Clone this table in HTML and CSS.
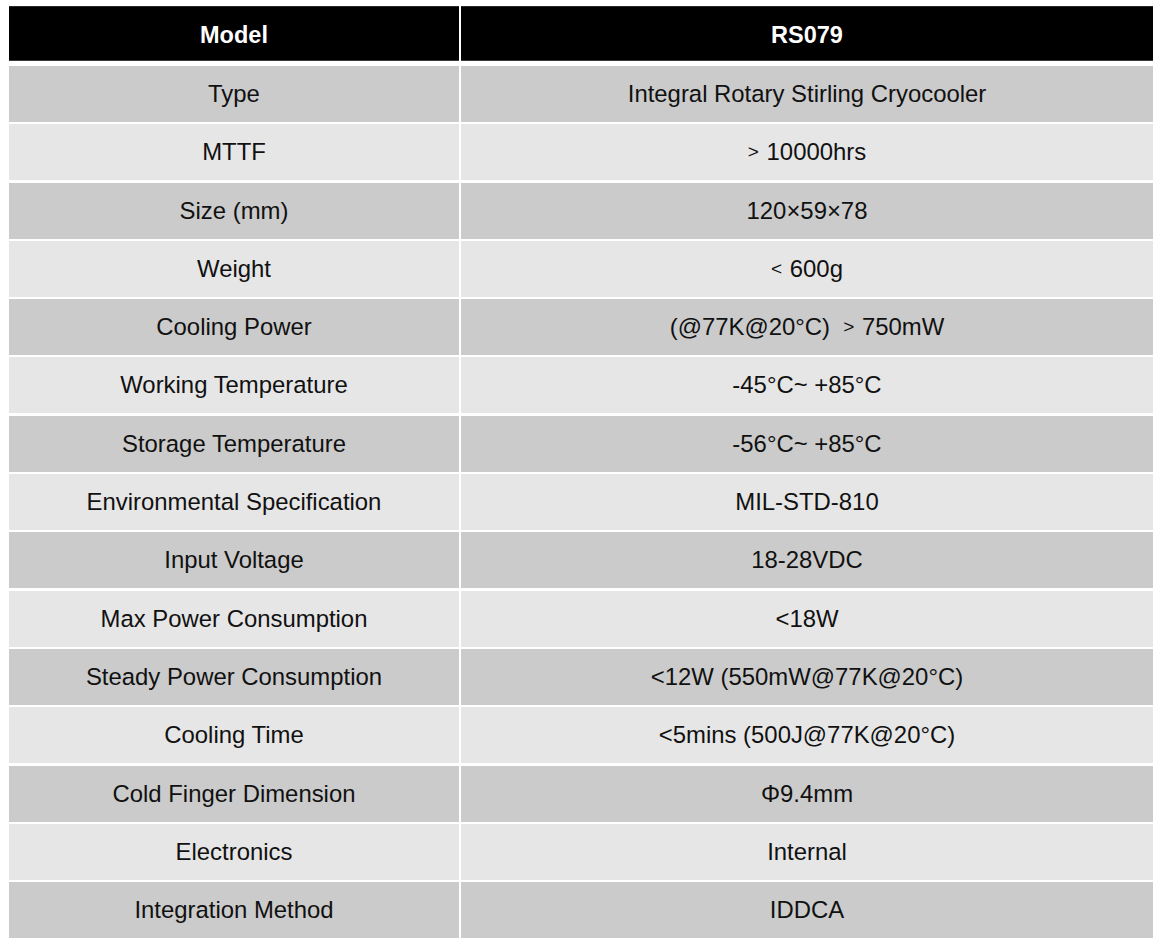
FILE: index.html
```html
<!DOCTYPE html>
<html>
<head>
<meta charset="utf-8">
<link rel="stylesheet" href="styles.css">
</head>
<body>
<div class="sheet">
  <div class="head">
    <div class="hcell">Model</div>
    <div class="hcell">RS079</div>
  </div>
  <div class="rows">
    <div class="cell dark">Type</div><div class="cell dark">Integral Rotary Stirling Cryocooler</div>
    <div class="cell light">MTTF</div><div class="cell light"><span class="sym">&gt;</span> 10000hrs</div>
    <div class="cell dark">Size (mm)</div><div class="cell dark">120×59×78</div>
    <div class="cell light">Weight</div><div class="cell light"><span class="sym">&lt;</span> 600g</div>
    <div class="cell dark">Cooling Power</div><div class="cell dark">(@77K@20°C)&nbsp;&nbsp;<span class="sym">&gt;</span> 750mW</div>
    <div class="cell light">Working Temperature</div><div class="cell light">-45°C~ +85°C</div>
    <div class="cell dark">Storage Temperature</div><div class="cell dark">-56°C~ +85°C</div>
    <div class="cell light">Environmental Specification</div><div class="cell light">MIL-STD-810</div>
    <div class="cell dark">Input Voltage</div><div class="cell dark">18-28VDC</div>
    <div class="cell light">Max Power Consumption</div><div class="cell light">&lt;18W</div>
    <div class="cell dark">Steady Power Consumption</div><div class="cell dark">&lt;12W (550mW@77K@20°C)</div>
    <div class="cell light">Cooling Time</div><div class="cell light">&lt;5mins (500J@77K@20°C)</div>
    <div class="cell dark">Cold Finger Dimension</div><div class="cell dark">Φ9.4mm</div>
    <div class="cell light">Electronics</div><div class="cell light">Internal</div>
    <div class="cell dark">Integration Method</div><div class="cell dark">IDDCA</div>
  </div>
</div>
</body>
</html>
```

FILE: styles.css
```css
html, body {
  margin: 0;
  padding: 0;
  background: #ffffff;
}
.sheet {
  padding: 6px 0 0 9px;
  width: 1144px;
  font-family: "Liberation Sans", Arial, sans-serif;
}
.head {
  display: grid;
  grid-template-columns: 450px 692px;
  column-gap: 2px;
  height: 55px;
  margin-bottom: 5px;
}
.hcell {
  background: #000;
  color: #fff;
  font-weight: bold;
  font-size: 23.5px;
  padding-top: 3px;
  display: flex;
  align-items: center;
  justify-content: center;
  box-shadow: inset 0 -1px 0 #3a3a3a, inset 0 1px 0 #2a2a2a;
}
.rows {
  display: grid;
  grid-template-columns: 450px 692px;
  grid-auto-rows: 56px;
  column-gap: 2px;
  row-gap: 2.3px;
}
.cell {
  display: flex;
  align-items: center;
  justify-content: center;
  font-size: 23.9px;
  color: #111;
  white-space: pre;
}
.dark { background: #cbcbcb; }
.light { background: #e6e6e6; }
.sym {
  font-size: 19px;
  margin-right: 1px;
}
```
